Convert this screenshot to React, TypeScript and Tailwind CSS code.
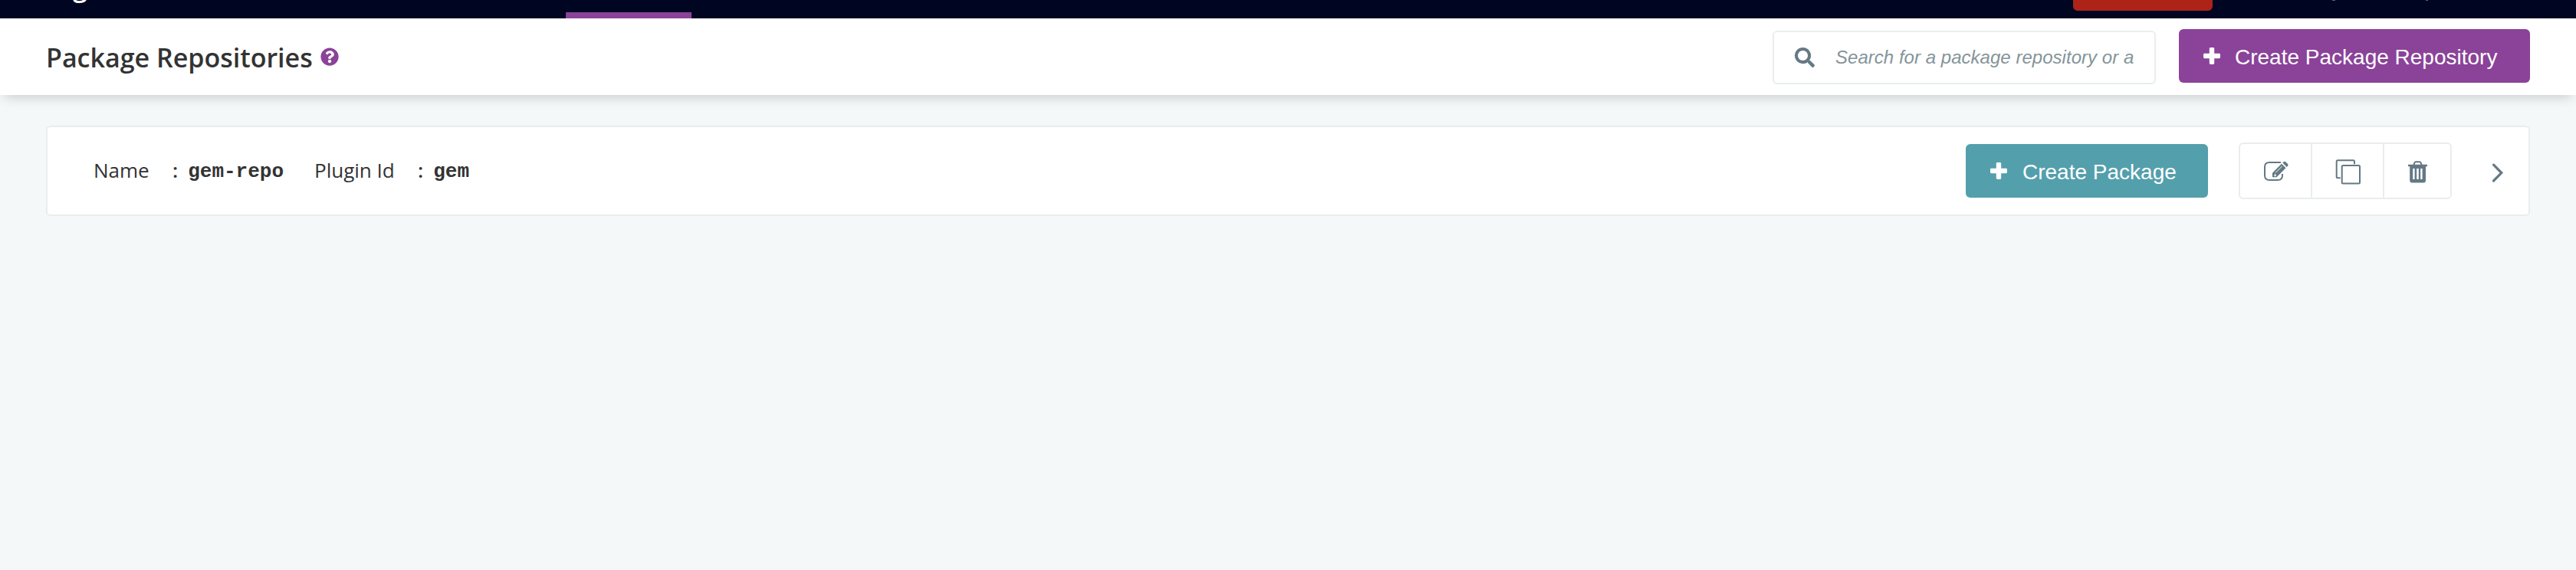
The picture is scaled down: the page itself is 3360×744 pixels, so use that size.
import React from "react";
import { FaSearch, FaQuestionCircle } from "react-icons/fa";

function PlusIcon() {
  return (
    <svg className="block h-[22px] w-[22px] shrink-0 fill-white" viewBox="0 0 22 22">
      <path d="M9.2 0h3.6q1.4 0 1.4 1.4v6.4h6.4q1.4 0 1.4 1.4v3.6q0 1.4-1.4 1.4h-6.4v6.4q0 1.4-1.4 1.4h-3.6q-1.4 0-1.4-1.4v-6.4H1.4q-1.4 0-1.4-1.4V9.2q0-1.4 1.4-1.4h6.4V1.4Q7.8 0 9.2 0z" />
    </svg>
  );
}

function EditIcon() {
  return (
    <svg className="mt-5 ml-7 block h-8 w-[38px]" viewBox="0 0 38 32">
      <path d="M25 4H10Q4 4 4 10V21Q4 27 10 27H21Q27 27 27 21V19" fill="none" stroke="#647984" strokeWidth="2" />
      <path d="M14 23.3V17.8L26 5.8L31.5 11.3L19.5 23.3z" fill="#647984" />
      <path d="M27.3 4.6L28.6 3.3Q29.9 2.2 31.2 3.3L34 6.1Q35.2 7.4 34 8.7L32.7 10z" fill="#647984" />
      <path d="M18 17.6L26.6 9M16 20.8H19.2M17.6 19.2V22.4" fill="none" stroke="#fff" strokeWidth="1" />
    </svg>
  );
}

function CopyIcon() {
  return (
    <svg className="mt-3 ml-6 block h-[46px] w-[50px]" viewBox="0 0 50 46" fill="none" stroke="#647984" strokeWidth="2">
      <path d="M31 14.3V11Q31 9.3 29.5 9.3H9.2Q7.7 9.3 7.7 11V30.8Q7.7 32.3 9.2 32.3H12.7" />
      <rect x="14.7" y="16" width="23.3" height="23.6" rx="1.5" />
    </svg>
  );
}

function TrashIcon() {
  return (
    <svg className="mt-3 ml-5 block h-[46px] w-[50px]" viewBox="0 0 50 46" fill="#647984">
      <path d="M18.3 15.5L19.3 12.6Q19.8 11.3 21.3 11.3H25.7Q27.2 11.3 27.7 12.6L28.7 15.5" fill="none" stroke="#647984" strokeWidth="2" />
      <path d="M11 15.3Q11 14.8 11.5 14.8H35.5Q36 14.8 36 15.3V17.2H34V35.6Q34 38.4 31.4 38.4H15.8Q13.2 38.4 13.2 35.6V17.2H11z" />
      <path d="M17.2 20H19.6V34H17.2zM22.2 20H24.8V34H22.2zM27.2 20H29.6V34H27.2z" fill="#fff" />
    </svg>
  );
}

function TopBar() {
  return (
    <div className="flex h-6 overflow-hidden bg-[#000522]">
      <div className="w-[738px] pl-[95px] font-['Open_Sans'] text-[34px] font-semibold text-white">
        <span className="-mt-[33px] block leading-[32px]">g</span>
      </div>
      <div className="mt-4 h-2 w-[164px] bg-[#8a4399]" />
      <div className="ml-[1802px] h-[14px] w-[182px] rounded-b-[6px] bg-[#ad2318]" />
      <div className="ml-[156px] h-px w-1 bg-[#5b5f72]" />
      <div className="ml-[118px] h-px w-[3px] bg-[#5b5f72]" />
    </div>
  );
}

function Header() {
  return (
    <header className="flex h-[100px] justify-between bg-white px-[60px] shadow-[0_8px_16px_-6px_rgba(0,0,0,0.2)]">
      <div className="flex pt-[28px]">
        <h1 className="font-['Open_Sans'] text-[34px] leading-[46px] font-semibold whitespace-nowrap text-[#333]">
          Package Repositories
        </h1>
        <FaQuestionCircle className="mt-[10px] ml-[10px] h-6 w-6 text-[#8a4399]" />
      </div>
      <div className="flex">
        <div className="mt-4 flex h-[70px] w-[500px] rounded-[6px] border-2 border-[#e9edef] pl-[27px]">
          <FaSearch className="mt-5 h-[26px] w-[26px] text-[#647984]" />
          <span className="mt-[15px] ml-[27px] w-[400px] overflow-hidden font-['Liberation_Sans'] text-[24px] leading-[36px] tracking-[0.03px] whitespace-nowrap text-[#849499] italic">
            Search for a package repository or a
          </span>
        </div>
        <button className="mt-[14px] ml-[30px] flex h-[70px] w-[458px] rounded-[6px] bg-[#8a4399] pt-6 pl-8">
          <PlusIcon />
          <span className="-mt-[3px] ml-[19px] font-['Liberation_Sans'] text-[28px] leading-[32px] whitespace-nowrap text-white">
            Create Package Repository
          </span>
        </button>
      </div>
    </header>
  );
}

function Field({ label, value, className }: { label: string; value: string; className: string }) {
  return (
    <div className={"flex leading-[36px] text-[#333] " + className}>
      <span className="font-['Open_Sans'] text-[26px] whitespace-nowrap">{label}</span>
      <span className="ml-auto font-['Open_Sans'] text-[26px] font-semibold">:</span>
      <span className="mt-0.5 ml-[13px] font-['Liberation_Mono'] text-[26px] font-bold whitespace-nowrap">{value}</span>
    </div>
  );
}

function RepositoryRow() {
  return (
    <section className="mx-[60px] mt-10 flex h-[118px] rounded-[6px] border-2 border-[#e9edef] bg-white">
      <Field label="Name" value="gem-repo" className="mt-[38px] ml-[60px] w-[248px]" />
      <Field label="Plugin Id" value="gem" className="mt-[38px] ml-[40px] w-[202px]" />
      <button className="mt-[22px] ml-auto flex h-[70px] w-[316px] rounded-[6px] bg-[#549fac] pt-6 pl-8">
        <PlusIcon />
        <span className="-mt-[3px] ml-[20px] font-['Liberation_Sans'] text-[28px] leading-[32px] whitespace-nowrap text-white">
          Create Package
        </span>
      </button>
      <div className="mt-5 ml-10 flex h-[74px] w-[278px] rounded-[6px] border-2 border-[#e9edef]">
        <button className="flex w-[94px] border-r-2 border-[#e9edef]" aria-label="Edit">
          <EditIcon />
        </button>
        <button className="flex w-[94px] border-r-2 border-[#e9edef]" aria-label="Clone">
          <CopyIcon />
        </button>
        <button className="flex w-[86px]" aria-label="Delete">
          <TrashIcon />
        </button>
      </div>
      <svg className="mt-[44px] mr-[30px] ml-[50px] block h-8 w-5" viewBox="0 0 20 32">
        <path d="M4.5 5.2L14.8 15.6L4.5 26" fill="none" stroke="#647984" strokeWidth="3.2" strokeLinecap="round" />
      </svg>
    </section>
  );
}

export default function App() {
  return (
    <div className="h-[744px] w-[3360px] overflow-hidden bg-[#f4f8f9]">
      <TopBar />
      <Header />
      <RepositoryRow />
    </div>
  );
}
